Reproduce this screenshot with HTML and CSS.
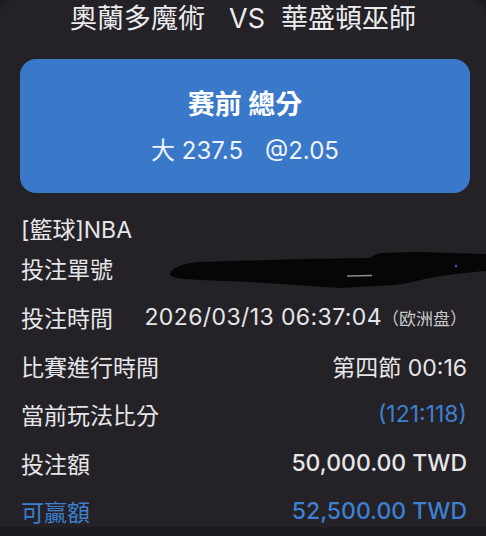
FILE: index.html
```html
<!DOCTYPE html>
<html lang="zh-Hant">
<head>
    <meta charset="UTF-8">
    <meta name="viewport" content="width=device-width, initial-scale=1.0">
    <title>注單詳情</title>
    <link rel="stylesheet" href="styles.css">
</head>
<body>
    <div class="sheet">
        <!-- 對陣 -->
        <h1 class="match">奧蘭多魔術<span class="vs">VS</span>華盛頓巫師</h1>

        <!-- 玩法卡片 -->
        <div class="bet-card">
            <div class="bet-type">赛前 總分</div>
            <div class="bet-pick">大 237.5<span class="odds">@2.05</span></div>
        </div>

        <!-- 注單資訊 -->
        <div class="row league">[籃球]NBA</div>
        <div class="row order">
            <span class="label">投注單號</span>
            <svg class="redact" viewBox="0 0 316 42" width="316" height="42">
                <path d="M0 26 C2 19 14 15 30 14 L130 11 L200 10 C205 6 210 5 215 4.7 L250 4 L316 6 L316 23 C290 25 270 28 260 30 C245 33 235 36 225 37 L170 40 L80 34 L30 32 C12 31 0 30 0 26 Z" fill="#060607"/>
                <path d="M177 28 L202 27.5" stroke="#8a8a90" stroke-width="1.5"/>
                <circle cx="286" cy="18" r="1.2" fill="#3f6fb0"/>
            </svg>
        </div>
        <ul class="details">
            <li><span class="label">投注時間</span><span class="value date">2026/03/13 06:37:04<small class="market">（欧洲盘）</small></span></li>
            <li><span class="label">比賽進行時間</span><span class="value">第四節 00:16</span></li>
            <li><span class="label">當前玩法比分</span><span class="value blue">(121:118)</span></li>
            <li><span class="label">投注額</span><span class="value strong">50,000.00 TWD</span></li>
            <li class="win"><span class="label">可贏額</span><span class="value strong">52,500.00 TWD</span></li>
        </ul>
    </div>
</body>
</html>
```

FILE: styles.css
```css
body {
    margin: 0;
    background: #1c1b1f;
    font-family: Inter, "Noto Sans CJK TC", sans-serif;
    color: #e6e6e8;
}
.sheet {
    height: 527px;
    overflow: hidden;
    background: #242227;
    border-radius: 14px 14px 0 0;
}
.match {
    margin: 0;
    font-size: 27px;
    font-weight: 400;
    line-height: 38px;
    text-align: center;
    color: #ececee;
}
.match .vs {
    margin: 0 16px 0 24px;
}
.bet-card {
    margin: 21px 16px 0 20px;
    padding: 28px 0 27px;
    background: #3a78c9;
    border-radius: 16px;
    text-align: center;
    color: #fff;
}
.bet-type {
    font-size: 27px;
    font-weight: 700;
    line-height: 36px;
}
.bet-pick {
    margin-top: 13px;
    font-size: 24px;
    line-height: 30px;
    color: #eef3fb;
}
.bet-pick .odds {
    margin-left: 22px;
}
.row, .details li {
    display: flex;
    justify-content: space-between;
    align-items: center;
    padding: 0 19px 0 21px;
    font-size: 23px;
}
.league {
    margin-top: 15px;
    height: 40px;
}
.order {
    position: relative;
    height: 40px;
}
.redact {
    position: absolute;
    left: 170px;
    top: 0;
}
.details {
    list-style: none;
    margin: 5px 0 0;
    padding: 0;
}
.details li {
    height: 48.5px;
}
.value {
    white-space: nowrap;
}
.date {
    letter-spacing: 0.4px;
}
.market {
    font-size: 17px;
    letter-spacing: 0;
    color: #c9c9cd;
}
.blue, .win .label, .win .value {
    color: #3d80d0;
}
.strong {
    font-weight: 500;
}
```
